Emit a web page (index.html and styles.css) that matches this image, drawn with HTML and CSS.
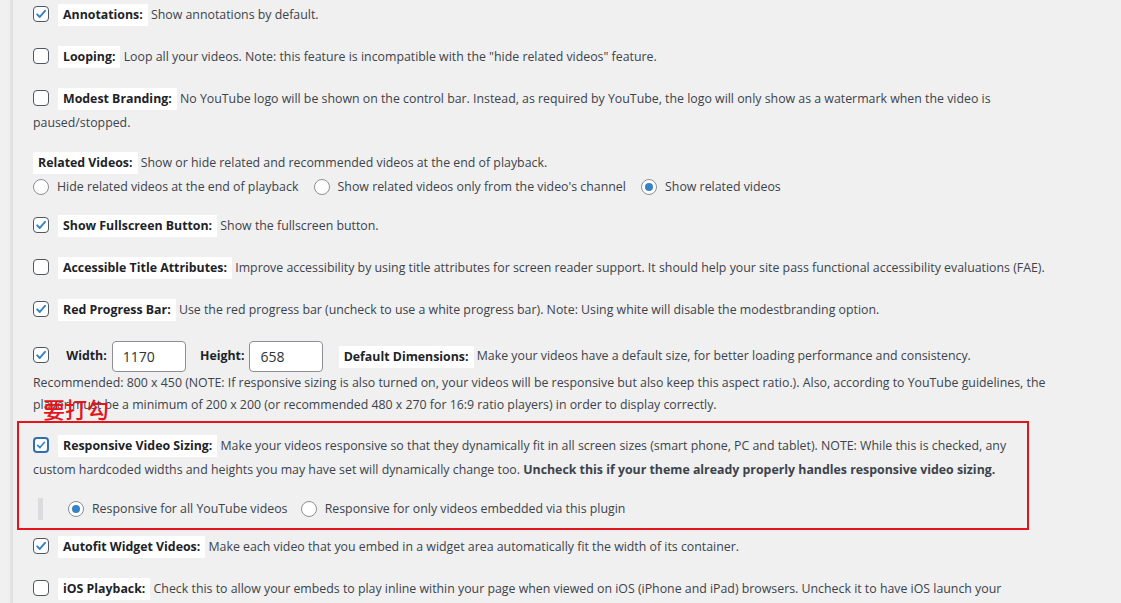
FILE: index.html
```html
<!DOCTYPE html>
<html lang="en">
<head>
<meta charset="utf-8">
<title>YouTube embed options</title>
<link rel="stylesheet" href="styles.css">
</head>
<body>
<div class="panel">
  <div class="settings">

    <p class="opt">
      <span class="cb on"><svg viewBox="0 0 16 16"><path d="M3.6 8.4 6.6 11.4 12.6 4.4"/></svg></span><label class="tag">Annotations:</label> Show annotations by default.
    </p>

    <p class="opt">
      <span class="cb"></span><label class="tag">Looping:</label> Loop all your videos. Note: this feature is incompatible with the "hide related videos" feature.
    </p>

    <p class="opt">
      <span class="cb"></span><label class="tag">Modest Branding:</label> No YouTube logo will be shown on the control bar. Instead, as required by YouTube, the logo will only show as a watermark when the video is paused/stopped.
    </p>

    <p class="opt opt-related">
      <label class="tag">Related Videos:</label> Show or hide related and recommended videos at the end of playback.<br>
      <span class="choice"><span class="rb"></span>Hide related videos at the end of playback</span>
      <span class="choice"><span class="rb"></span>Show related videos only from the video's channel</span>
      <span class="choice"><span class="rb on"></span>Show related videos</span>
    </p>

    <p class="opt">
      <span class="cb on"><svg viewBox="0 0 16 16"><path d="M3.6 8.4 6.6 11.4 12.6 4.4"/></svg></span><label class="tag">Show Fullscreen Button:</label> Show the fullscreen button.
    </p>

    <p class="opt">
      <span class="cb"></span><label class="tag">Accessible Title Attributes:</label> Improve accessibility by using title attributes for screen reader support. It should help your site pass functional accessibility evaluations (FAE).
    </p>

    <p class="opt">
      <span class="cb on"><svg viewBox="0 0 16 16"><path d="M3.6 8.4 6.6 11.4 12.6 4.4"/></svg></span><label class="tag">Red Progress Bar:</label> Use the red progress bar (uncheck to use a white progress bar). Note: Using white will disable the modestbranding option.
    </p>

    <div class="opt opt-size">
      <div class="size-line">
        <span class="cb on"><svg viewBox="0 0 16 16"><path d="M3.6 8.4 6.6 11.4 12.6 4.4"/></svg></span>
        <b class="dim-label">Width:</b><span class="num">1170</span>
        <b class="dim-label dim-h">Height:</b><span class="num">658</span>
        <label class="tag">Default Dimensions:</label> Make your videos have a default size, for better loading performance and consistency.
      </div>
      <p class="size-note">Recommended: 800 x 450 (NOTE: If responsive sizing is also turned on, your videos will be responsive but also keep this aspect ratio.). Also, according to YouTube guidelines, the player must be a minimum of 200 x 200 (or recommended 480 x 270 for 16:9 ratio players) in order to display correctly.</p>
    </div>

    <div class="highlight">
      <span class="mark">要打勾</span>
      <p class="opt">
        <span class="cb on focus"><svg viewBox="0 0 16 16"><path d="M3.6 8.4 6.6 11.4 12.6 4.4"/></svg></span><label class="tag">Responsive Video Sizing:</label> Make your videos responsive so that they dynamically fit in all screen sizes (smart phone, PC and tablet). NOTE: While this is checked, any custom hardcoded widths and heights you may have set will dynamically change too. <b>Uncheck this if your theme already properly handles responsive video sizing.</b>
      </p>
      <div class="sub-choices">
        <span class="choice"><span class="rb on"></span>Responsive for all YouTube videos</span>
        <span class="choice"><span class="rb"></span>Responsive for only videos embedded via this plugin</span>
      </div>
    </div>

    <p class="opt">
      <span class="cb on"><svg viewBox="0 0 16 16"><path d="M3.6 8.4 6.6 11.4 12.6 4.4"/></svg></span><label class="tag">Autofit Widget Videos:</label> Make each video that you embed in a widget area automatically fit the width of its container.
    </p>

    <p class="opt">
      <span class="cb"></span><label class="tag">iOS Playback:</label> Check this to allow your embeds to play inline within your page when viewed on iOS (iPhone and iPad) browsers. Uncheck it to have iOS launch your embeds in its own full-screen player instead.
    </p>

  </div>
</div>
</body>
</html>
```

FILE: styles.css
```css
html, body {
  margin: 0;
  background: #f0f0f1;
}

body {
  font-family: "Segoe UI", "Open Sans", "Noto Sans", sans-serif;
  font-size: 12.35px;
  color: #3c434a;
  overflow: hidden;
}

.panel {
  margin-left: 10px;
  border-left: 3px solid #e2e2e3;
  padding: 3px 0 0 20px;
}

.settings {
  width: 1015px;
}

.opt {
  margin: 0 0 18px;
  line-height: 24px;
}

/* option name chips */
.tag {
  display: inline-block;
  background: #fff;
  color: #1d2327;
  font-weight: 700;
  line-height: 14px;
  padding: 4px 5px;
  vertical-align: 0;
}

/* checkboxes */
.cb {
  display: inline-block;
  box-sizing: border-box;
  width: 16px;
  height: 16px;
  border: 1px solid #50575e;
  border-radius: 4px;
  background: #fff;
  vertical-align: -3px;
  margin-right: 9px;
}

.cb svg {
  display: block;
  width: 14px;
  height: 14px;
}

.cb path {
  fill: none;
  stroke: #3582c4;
  stroke-width: 2.2;
  stroke-linecap: round;
  stroke-linejoin: round;
}

.cb.focus {
  border: 2px solid #2f6fad;
}

.cb.focus svg {
  width: 12px;
  height: 12px;
}

/* radio buttons */
.choice {
  display: inline-block;
  margin-right: 12px;
}

.rb {
  display: inline-block;
  box-sizing: border-box;
  width: 16px;
  height: 16px;
  border: 1px solid #8c8f94;
  border-radius: 50%;
  background: #fff;
  vertical-align: -4px;
  margin-right: 8px;
  position: relative;
}

.rb.on::after {
  content: "";
  position: absolute;
  left: 3px;
  top: 3px;
  width: 8px;
  height: 8px;
  border-radius: 50%;
  background: #3582c4;
}

.opt-related {
  margin-top: -2px;
  margin-bottom: 15px;
}

/* width / height row */
.opt-size {
  margin-top: 19px;
  margin-bottom: 0;
}

.size-line {
  line-height: 30px;
  height: 30px;
}

.dim-label {
  color: #1d2327;
  margin-left: 5px;
}

.dim-h {
  margin-left: 11px;
}

.num {
  display: inline-block;
  box-sizing: border-box;
  width: 74px;
  height: 31px;
  border: 1px solid #8c8f94;
  border-radius: 4px;
  background: #fff;
  padding: 0 10px;
  font-size: 14px;
  line-height: 29px;
  color: #2c3338;
  vertical-align: middle;
  margin-left: 5px;
}

.size-line .tag {
  margin-left: 12px;
  vertical-align: middle;
}

.size-note {
  margin: 1px 0 0;
  line-height: 22px;
}

/* annotated block */
.highlight {
  position: relative;
  border: 2px solid #e5131b;
  margin: 5px 0 5px -16px;
  width: 994px;
  padding: 11px 0 8px 14px;
}

.highlight .opt {
  margin: 0 -21px 16px 0;
}

.mark {
  position: absolute;
  left: 24px;
  top: -28px;
  font-family: "Noto Sans CJK SC", sans-serif;
  font-size: 22px;
  font-weight: 500;
  line-height: 26px;
  color: #e5131b;
}

.sub-choices {
  border-left: 5px solid #dcdcde;
  margin-left: 5px;
  padding-left: 25px;
  line-height: 22px;
}

.sub-choices .choice {
  margin-right: 10px;
}
```
